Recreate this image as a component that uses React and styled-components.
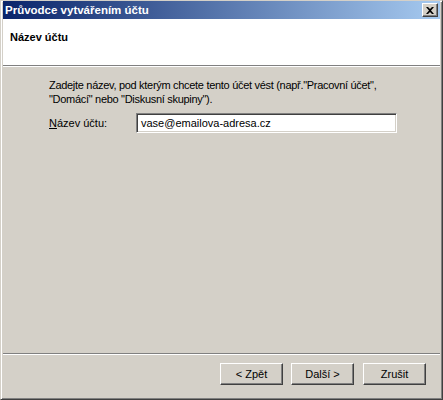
import React from "react";
import styled, { createGlobalStyle } from "styled-components";

const GlobalStyle = createGlobalStyle`
  html, body {
    margin: 0;
    padding: 0;
    background: #d4d0c8;
  }
  body {
    font-family: Tahoma, "Liberation Sans", sans-serif;
    font-size: 11px;
    color: #000;
  }
`;

const Window = styled.div`
  box-sizing: border-box;
  width: 443px;
  height: 400px;
  display: flex;
  flex-direction: column;
  background: #d4d0c8;
  border-left: 1px solid #d4d0c8;
  border-top: 1px solid #d4d0c8;
  border-right: 1px solid #404040;
  border-bottom: 1px solid #404040;
  box-shadow: inset 1px 1px 0 #ffffff, inset -1px -1px 0 #808080;
  padding: 0 2px 2px 2px;
`;

const TitleBar = styled.div`
  height: 18px;
  display: flex;
  align-items: center;
  justify-content: space-between;
  padding: 0 2px 0 2px;
  background: linear-gradient(to right, #0a246a, #a6caf0);
  color: #fff;
  font-family: "Liberation Sans", sans-serif;
  font-weight: bold;
  font-size: 11.5px;
`;

const CloseButton = styled.div`
  box-sizing: border-box;
  width: 16px;
  height: 14px;
  background: #d4d0c8;
  border-left: 1px solid #fff;
  border-top: 1px solid #fff;
  border-right: 1px solid #404040;
  border-bottom: 1px solid #404040;
  box-shadow: inset -1px -1px 0 #808080;
  display: flex;
  align-items: center;
  justify-content: center;
`;

const Header = styled.div`
  height: 47px;
  background: #fff;
  padding: 12px 0 0 7px;
  box-sizing: border-box;
  font-family: "Liberation Sans", sans-serif;
  font-weight: bold;
  font-size: 11px;
  border-bottom: 1px solid #808080;
  box-shadow: 0 1px 0 #fff;
`;

const Body = styled.div`
  flex: 1;
  padding: 12px 0 0 46px;
  font-family: "Liberation Sans", sans-serif;
  font-size: 11px;
  line-height: 14px;
`;

const Intro = styled.p`
  margin: 0;
  white-space: nowrap;
  letter-spacing: -0.3px;
`;

const FieldRow = styled.div`
  display: flex;
  align-items: center;
  margin-top: 7px;
`;

const Label = styled.label`
  width: 87px;
  u {
    text-decoration: underline;
  }
`;

const TextInput = styled.div`
  box-sizing: border-box;
  width: 261px;
  height: 20px;
  background: #fff;
  border-left: 1px solid #808080;
  border-top: 1px solid #808080;
  border-right: 1px solid #fff;
  border-bottom: 1px solid #fff;
  box-shadow: inset 1px 1px 0 #404040, inset -1px -1px 0 #d4d0c8;
  padding: 2px 4px;
  display: flex;
  align-items: center;
`;

const Footer = styled.div`
  height: 44px;
  border-top: 1px solid #808080;
  box-shadow: inset 0 1px 0 #fff;
  display: flex;
  justify-content: flex-end;
  align-items: flex-start;
  padding: 9px 14px 0 0;
  box-sizing: border-box;
  gap: 8px;
`;

const Button = styled.button`
  box-sizing: border-box;
  width: 63px;
  height: 22px;
  margin-left: ${(p) => (p.$apart ? "1px" : "0")};
  background: #d4d0c8;
  border-left: 1px solid #fff;
  border-top: 1px solid #fff;
  border-right: 1px solid #404040;
  border-bottom: 1px solid #404040;
  box-shadow: inset -1px -1px 0 #808080;
  font-family: "Liberation Sans", sans-serif;
  font-size: 11px;
  color: #000;
  padding: 0;
`;

export default function App() {
  return (
    <>
      <GlobalStyle />
      <Window>
        <TitleBar>
          <span>Průvodce vytvářením účtu</span>
          <CloseButton>
            <svg width="8" height="7" viewBox="0 0 8 7">
              <path d="M0 0h2l2 2 2-2h2L5 3.5 8 7H6L4 5 2 7H0l3-3.5z" fill="#000" />
            </svg>
          </CloseButton>
        </TitleBar>
        <Header>Název účtu</Header>
        <Body>
          <Intro>
            Zadejte název, pod kterým chcete tento účet vést (např."Pracovní účet",
            <br />
            "Domácí" nebo "Diskusní skupiny").
          </Intro>
          <FieldRow>
            <Label>
              <u>N</u>ázev účtu:
            </Label>
            <TextInput>vase@emailova-adresa.cz</TextInput>
          </FieldRow>
        </Body>
        <Footer>
          <Button>&lt; Zpět</Button>
          <Button>Další &gt;</Button>
          <Button $apart>Zrušit</Button>
        </Footer>
      </Window>
    </>
  );
}
